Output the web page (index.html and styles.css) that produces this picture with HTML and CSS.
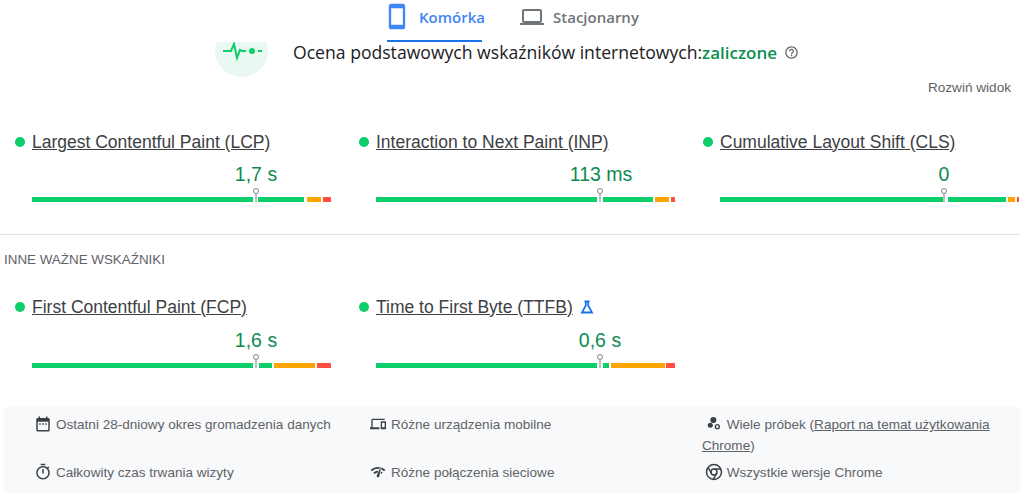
FILE: index.html
```html
<!DOCTYPE html>
<html lang="pl">
<head>
  <meta charset="UTF-8">
  <title>Ocena podstawowych wskaźników internetowych</title>
  <link rel="stylesheet" href="styles.css">
</head>
<body>

  <nav class="tabs">
    <a class="tab active">
      <svg class="tab-icon" viewBox="0 0 24 24"><path d="M17 1.01L7 1c-1.1 0-2 .9-2 2v18c0 1.1.9 2 2 2h10c1.1 0 2-.9 2-2V3c0-1.1-.9-1.99-2-1.99zM17 19H7V5h10v14z"/></svg>
      <span class="tab-label">Komórka</span>
    </a>
    <a class="tab">
      <svg class="tab-icon" viewBox="0 0 24 24"><path d="M20 18c1.1 0 1.99-.9 1.99-2L22 6c0-1.1-.9-2-2-2H4c-1.1 0-2 .9-2 2v10c0 1.1.9 2 2 2H0v2h24v-2h-4zM4 6h16v10H4V6z"/></svg>
      <span class="tab-label">Stacjonarny</span>
    </a>
  </nav>

  <div class="verdict">
    <div class="pulse-clip">
      <div class="pulse">
        <svg viewBox="0 0 40 20" width="40" height="20">
          <path class="pulse-line" d="M1 9h8l3-7 3 14 3-8 2 1h4"/>
          <circle class="pulse-dot" cx="30" cy="9" r="3"/>
          <path class="pulse-line" d="M36 9h4"/>
        </svg>
      </div>
    </div>
    <h2>Ocena podstawowych wskaźników internetowych:<span class="pass">zaliczone</span></h2>
    <svg class="help" viewBox="0 0 24 24"><path d="M11 18h2v-2h-2v2zm1-16C6.480 2 2 6.480 2 12s4.480 10 10 10 10-4.480 10-10S17.520 2 12 2zm0 18c-4.410 0-8-3.590-8-8s3.590-8 8-8 8 3.590 8 8-3.590 8-8 8zm0-14c-2.210 0-4 1.790-4 4h2c0-1.100.9-2 2-2s2 .9 2 2c0 2-3 1.750-3 5h2c0-2.250 3-2.500 3-5 0-2.210-1.790-4-4-4z"/></svg>
  </div>

  <div class="expand"><a>Rozwiń widok</a></div>

  <section class="metrics">
    <div class="metric">
      <div class="metric-title"><span class="dot"></span><a>Largest Contentful Paint (LCP)</a></div>
      <div class="value" style="margin-left: 241px">1,7 s</div>
      <div class="bar">
        <span class="seg good" style="width: 221px"></span>
        <span class="marker" style="left: 224px"></span>
        <span class="seg good" style="width: 46px; margin-left: 5px"></span>
        <span class="seg avg" style="width: 14px; margin-left: 3px"></span>
        <span class="seg poor" style="width: 8px; margin-left: 2px"></span>
      </div>
    </div>
    <div class="metric">
      <div class="metric-title"><span class="dot"></span><a>Interaction to Next Paint (INP)</a></div>
      <div class="value" style="margin-left: 242px">113 ms</div>
      <div class="bar">
        <span class="seg good" style="width: 221px"></span>
        <span class="marker" style="left: 224px"></span>
        <span class="seg good" style="width: 50px; margin-left: 6px"></span>
        <span class="seg avg" style="width: 14px; margin-left: 2px"></span>
        <span class="seg poor" style="width: 4px; margin-left: 2px"></span>
      </div>
    </div>
    <div class="metric">
      <div class="metric-title"><span class="dot"></span><a>Cumulative Layout Shift (CLS)</a></div>
      <div class="value" style="margin-left: 241px">0</div>
      <div class="bar">
        <span class="seg good" style="width: 223px"></span>
        <span class="marker" style="left: 224px"></span>
        <span class="seg good" style="width: 58px; margin-left: 5px"></span>
        <span class="seg avg" style="width: 7px; margin-left: 2px"></span>
        <span class="seg poor" style="width: 2px; margin-left: 2px"></span>
      </div>
    </div>
  </section>

  <h3 class="other-title">Inne ważne wskaźniki</h3>

  <section class="metrics other">
    <div class="metric">
      <div class="metric-title"><span class="dot"></span><a>First Contentful Paint (FCP)</a></div>
      <div class="value" style="margin-left: 241px">1,6 s</div>
      <div class="bar">
        <span class="seg good" style="width: 221px"></span>
        <span class="marker" style="left: 224px"></span>
        <span class="seg good" style="width: 13px; margin-left: 6px"></span>
        <span class="seg avg" style="width: 41px; margin-left: 2px"></span>
        <span class="seg poor" style="width: 14px; margin-left: 2px"></span>
      </div>
    </div>
    <div class="metric">
      <div class="metric-title"><span class="dot"></span><a>Time to First Byte (TTFB)</a>
        <svg class="flask" viewBox="0 0 14 14"><path d="M4.500 1.500h5M5.800 1.500v4L2 12.500h10L8.200 5.500v-4"/></svg>
      </div>
      <div class="value" style="margin-left: 241px">0,6 s</div>
      <div class="bar">
        <span class="seg good" style="width: 221px"></span>
        <span class="marker" style="left: 224px"></span>
        <span class="seg good" style="width: 6px; margin-left: 6px"></span>
        <span class="seg avg" style="width: 54px; margin-left: 2px"></span>
        <span class="seg poor" style="width: 9px; margin-left: 1px"></span>
      </div>
    </div>
  </section>

  <footer class="notes">
    <div class="note">
      <svg class="note-icon large" viewBox="0 0 24 24"><path d="M19 4h-1V2h-2v2H8V2H6v2H5c-1.100 0-2 .9-2 2v14c0 1.100.9 2 2 2h14c1.100 0 2-.9 2-2V6c0-1.100-.9-2-2-2zm0 16H5V9h14v11zM7 11h2v2H7zm4 0h2v2h-2zm4 0h2v2h-2z"/></svg>
      Ostatni 28-dniowy okres gromadzenia danych
    </div>
    <div class="note">
      <svg class="note-icon" viewBox="0 0 24 24"><path d="M4 6h18V4H4c-1.100 0-2 .9-2 2v11H0v3h14v-3H4V6zm19 2h-6c-.55 0-1 .45-1 1v10c0 .55.45 1 1 1h6c.55 0 1-.45 1-1V9c0-.55-.45-1-1-1zm-1 9h-4v-7h4v7z"/></svg>
      Różne urządzenia mobilne
    </div>
    <div class="note wrap">
      <svg class="note-icon" viewBox="0 0 24 24"><circle cx="11" cy="6" r="4.500"/><circle cx="6.500" cy="14" r="3.800"/><circle class="ring" cx="17" cy="16" r="3"/></svg>
      Wiele próbek (<a>Raport na temat użytkowania Chrome</a>)
    </div>
    <div class="note">
      <svg class="note-icon large" viewBox="0 0 24 24"><path d="M15 1H9v2h6V1zm-4 13h2V8h-2v6zm8.030-6.610l1.420-1.420c-.43-.51-.9-.99-1.410-1.410l-1.420 1.420C16.070 4.740 14.120 4 12 4c-4.970 0-9 4.030-9 9s4.020 9 9 9 9-4.030 9-9c0-2.120-.74-4.070-1.970-5.610zM12 20c-3.870 0-7-3.130-7-7s3.130-7 7-7 7 3.130 7 7-3.130 7-7 7z"/></svg>
      Całkowity czas trwania wizyty
    </div>
    <div class="note">
      <svg class="note-icon" viewBox="0 0 24 24"><path d="M15.900 5c-.17 0-.32.09-.41.23l-.07.15-5.180 11.650c-.16.29-.26.61-.26.96 0 1.110.9 2.010 2.010 2.010.96 0 1.770-.68 1.960-1.590l.01-.03L16.400 5.500c0-.28-.22-.5-.5-.5zM1 9l2 2c2.880-2.880 6.790-4.080 10.530-3.620l1.190-2.680C9.890 3.840 4.740 5.270 1 9zm20 2l2-2c-1.640-1.640-3.550-2.820-5.590-3.570l-.53 2.820c1.500.62 2.900 1.530 4.120 2.750zm-4 4l2-2c-.8-.8-1.700-1.420-2.660-1.890l-.55 2.920c.42.27.83.59 1.210.97zM5 13l2 2c1.130-1.130 2.560-1.790 4.030-2l1.280-2.880c-2.630-.08-5.300.87-7.310 2.880z"/></svg>
      Różne połączenia sieciowe
    </div>
    <div class="note wrap">
      <svg class="note-icon chrome" viewBox="0 0 24 24"><circle cx="12" cy="12" r="10"/><circle cx="12" cy="12" r="4"/><path d="M12 8h9M8.600 14L4.200 6M15.400 14L11 21.800"/></svg>
      Wszystkie wersje Chrome
    </div>
  </footer>

</body>
</html>
```

FILE: styles.css
```css
body {
  font-family: "Liberation Sans", Arial, sans-serif;
  background: #fff;
  color: #5f6368;
  margin: 0;
  height: 493px;
  overflow: hidden;
}

a {
  color: inherit;
}

/* tabs */
.tabs {
  display: flex;
  gap: 38px;
  height: 42px;
  padding-left: 387px;
  box-sizing: border-box;
}

.tab {
  display: flex;
  align-items: center;
  height: 42px;
  box-sizing: border-box;
  padding: 0 0 9px;
  font-family: "Open Sans", sans-serif;
  font-size: 15px;
  font-weight: 600;
  color: #70757a;
}

.tab.active {
  width: 95px;
  color: #4285f4;
  border-bottom: 2px solid #1a73e8;
  padding-bottom: 7px;
}

.tab-icon {
  width: 24px;
  height: 24px;
  margin-right: 9px;
  fill: currentColor;
}

.tab.active .tab-icon {
  width: 28px;
  height: 29px;
  margin: 0 8px 0 -4px;
  flex: none;
}

.tab-label {
  white-space: nowrap;
}

/* verdict */
.verdict {
  display: flex;
  align-items: flex-start;
  height: 35px;
  padding-left: 215px;
}

.pulse-clip {
  width: 53px;
  height: 35px;
  overflow: hidden;
  margin-right: 25px;
}

.pulse {
  width: 53px;
  height: 53px;
  margin-top: -18px;
  padding-top: 18px;
  box-sizing: border-box;
  border-radius: 50%;
  background: #e9f9f1;
}

.pulse svg {
  display: block;
  margin: 0 auto;
}

.pulse-line {
  fill: none;
  stroke: #0cce6b;
  stroke-width: 2;
}

.pulse-dot {
  fill: #0cce6b;
}

.verdict h2 {
  margin: 0;
  font-family: "Open Sans", sans-serif;
  font-size: 17.600px;
  font-weight: 500;
  line-height: 20px;
  color: #202124;
}

.pass {
  color: #0d904f;
  font-size: 17px;
  font-weight: 600;
}

.help {
  width: 15px;
  height: 15px;
  margin: 3px 0 0 7px;
  fill: #5f6368;
}

.expand {
  display: flex;
  justify-content: flex-end;
  padding: 3px 13px 0 0;
  font-size: 13.600px;
  line-height: 16px;
  color: #5f6368;
}

/* metrics */
.metrics {
  display: grid;
  grid-template-columns: repeat(3, 344px);
  padding-left: 15px;
  margin-top: 36px;
  padding-bottom: 32px;
  border-bottom: 1px solid #e0e0e0;
  margin-right: 4px;
}

.metrics.other {
  margin-top: 29px;
  border-bottom: 0;
  padding-bottom: 0;
}

.metric-title {
  display: flex;
  align-items: center;
  height: 20px;
  font-size: 17.500px;
  color: #3c4043;
}

.metric-title a {
  text-decoration: underline;
}

.dot {
  width: 10px;
  height: 10px;
  border-radius: 50%;
  background: #0cce6b;
  margin-right: 7px;
}

.flask {
  width: 14px;
  height: 14px;
  margin-left: 7px;
  fill: none;
  stroke: #1a73e8;
  stroke-width: 1.800;
}

.value {
  width: max-content;
  transform: translateX(-50%);
  margin-top: 11px;
  font-size: 19.500px;
  line-height: 22px;
  color: #0d8a4f;
}

.other .value {
  margin-top: 12px;
}

.bar {
  position: relative;
  display: flex;
  height: 5px;
  width: 299px;
  margin: 12px 0 0 17px;
}

.seg {
  display: block;
  height: 5px;
}

.good {
  background: #0cce6b;
}

.avg {
  background: #ffa400;
}

.poor {
  background: #ff4e42;
}

.marker {
  position: absolute;
  bottom: 0;
  width: 2px;
  height: 8px;
  margin-left: -1px;
  background: #bdc1c6;
}

.marker::before {
  content: "";
  position: absolute;
  left: -2px;
  top: -6px;
  width: 4px;
  height: 4px;
  border: 1px solid #80868b;
  border-radius: 50%;
  background: #fff;
}

.other-title {
  margin: 17px 0 0 4px;
  font-size: 13.400px;
  font-weight: 400;
  line-height: 16px;
  text-transform: uppercase;
  color: #5f6368;
}

/* footer */
.notes {
  display: grid;
  grid-template-columns: 334px 332px 1fr;
  grid-template-rows: 48px 38px;
  margin: 39px 4px 0;
  padding: 7px 28px 0 32px;
  background: #f8f9fa;
  font-size: 13.550px;
  line-height: 21px;
  color: #5f6368;
}

.note {
  display: flex;
  align-items: flex-start;
  gap: 5px;
}

.note.wrap {
  display: block;
}

.note a {
  text-decoration: underline;
}

.note-icon {
  width: 16px;
  height: 16px;
  flex: none;
  margin-top: 2px;
  fill: #3c4043;
}

.note-icon.large {
  width: 18px;
  height: 18px;
  margin: 1px -1px 0 -2px;
}

.note.wrap .note-icon {
  margin: 0 1px 0 4px;
  vertical-align: -3px;
}

.note-icon .ring {
  fill: none;
  stroke: #3c4043;
  stroke-width: 2;
}

.note.wrap .note-icon.chrome {
  width: 18px;
  height: 18px;
  margin: 0 0 0 3px;
  vertical-align: -4px;
  fill: none;
  stroke: #3c4043;
  stroke-width: 2;
}
```
